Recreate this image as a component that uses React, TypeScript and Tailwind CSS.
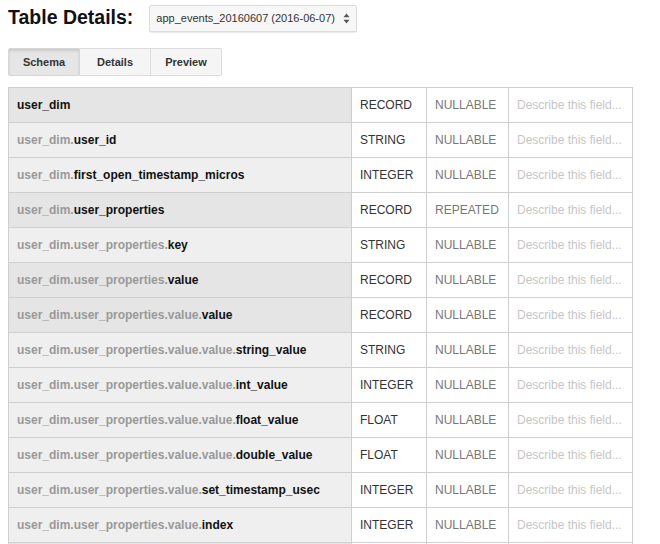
import React from "react";

type Row = { prefix: string; leaf: string; type: string; mode: string };

const rows: Row[] = [
  { prefix: "", leaf: "user_dim", type: "RECORD", mode: "NULLABLE" },
  { prefix: "user_dim.", leaf: "user_id", type: "STRING", mode: "NULLABLE" },
  { prefix: "user_dim.", leaf: "first_open_timestamp_micros", type: "INTEGER", mode: "NULLABLE" },
  { prefix: "user_dim.", leaf: "user_properties", type: "RECORD", mode: "REPEATED" },
  { prefix: "user_dim.user_properties.", leaf: "key", type: "STRING", mode: "NULLABLE" },
  { prefix: "user_dim.user_properties.", leaf: "value", type: "RECORD", mode: "NULLABLE" },
  { prefix: "user_dim.user_properties.value.", leaf: "value", type: "RECORD", mode: "NULLABLE" },
  { prefix: "user_dim.user_properties.value.value.", leaf: "string_value", type: "STRING", mode: "NULLABLE" },
  { prefix: "user_dim.user_properties.value.value.", leaf: "int_value", type: "INTEGER", mode: "NULLABLE" },
  { prefix: "user_dim.user_properties.value.value.", leaf: "float_value", type: "FLOAT", mode: "NULLABLE" },
  { prefix: "user_dim.user_properties.value.value.", leaf: "double_value", type: "FLOAT", mode: "NULLABLE" },
  { prefix: "user_dim.user_properties.value.", leaf: "set_timestamp_usec", type: "INTEGER", mode: "NULLABLE" },
  { prefix: "user_dim.user_properties.value.", leaf: "index", type: "INTEGER", mode: "NULLABLE" },
];

export default function App() {
  return (
    <div className="h-[544px] overflow-hidden bg-white pl-2 pt-[5px] font-['Liberation_Sans',Arial,sans-serif] text-[#333]">
      <div className="flex items-center h-[27px]">
        <h1 className="text-[19.5px] font-bold text-[#111] leading-none mt-[-2px]">Table Details:</h1>
        <div className="ml-[16px] flex h-[27px] w-[208px] items-center rounded-[2px] border border-[#dcdcdc] bg-[#f7f7f7] pl-[6px] pr-[6px] text-[11px] text-[#333] shadow-[0_1px_1px_rgba(0,0,0,0.08)]">
          <span className="flex-1">app_events_20160607 (2016-06-07)</span>
          <svg width="7" height="11" viewBox="0 0 7 11" className="ml-[2px]">
            <path d="M3.5 0.5 L6.5 4.2 L0.5 4.2 Z" fill="#555" />
            <path d="M3.5 10.5 L6.5 6.8 L0.5 6.8 Z" fill="#555" />
          </svg>
        </div>
      </div>

      <div className="mt-[16px] flex h-[28px] w-[214px] text-[11px] font-bold text-[#333]">
        <div className="flex w-[72px] items-center justify-center rounded-l-[2px] border border-[#d6d6d6] bg-[#e6e6e6] shadow-[inset_0_2px_3px_rgba(0,0,0,0.12)]">
          Schema
        </div>
        <div className="flex w-[71px] items-center justify-center border-y border-r border-[#dcdcdc] bg-[#f5f5f5]">
          Details
        </div>
        <div className="flex w-[71px] items-center justify-center rounded-r-[2px] border-y border-r border-[#dcdcdc] bg-[#f5f5f5]">
          Preview
        </div>
      </div>

      <table className="mt-[11px] w-[624px] table-fixed border-collapse text-[12px]">
        <colgroup>
          <col className="w-[343px]" />
          <col className="w-[75px]" />
          <col className="w-[82px]" />
          <col className="w-[124px]" />
        </colgroup>
        <tbody>
          {rows.map((r, i) => {
            const dark = r.type === "RECORD";
            return (
              <tr key={i} className="h-[35px]">
                <td
                  className={
                    "border border-[#cfcfcf] px-[8px] font-bold whitespace-nowrap overflow-hidden " +
                    (dark ? "bg-[#e5e5e5]" : "bg-[#efefef]")
                  }
                >
                  {r.prefix && <span className="text-[#999]">{r.prefix}</span>}
                  <span className="text-[#111]">{r.leaf}</span>
                </td>
                <td className="border border-[#cfcfcf] px-[8px] text-[#333]">{r.type}</td>
                <td className="border border-[#cfcfcf] px-[8px] text-[#777]">{r.mode}</td>
                <td className="border border-[#cfcfcf] px-[8px] text-[#c6c6c6] whitespace-nowrap overflow-hidden">
                  Describe this field...
                </td>
              </tr>
            );
          })}
          <tr className="h-[35px]">
            <td className="border border-[#cfcfcf] bg-[#e5e5e5]" />
            <td className="border border-[#cfcfcf]" />
            <td className="border border-[#cfcfcf]" />
            <td className="border border-[#cfcfcf]" />
          </tr>
        </tbody>
      </table>
    </div>
  );
}
